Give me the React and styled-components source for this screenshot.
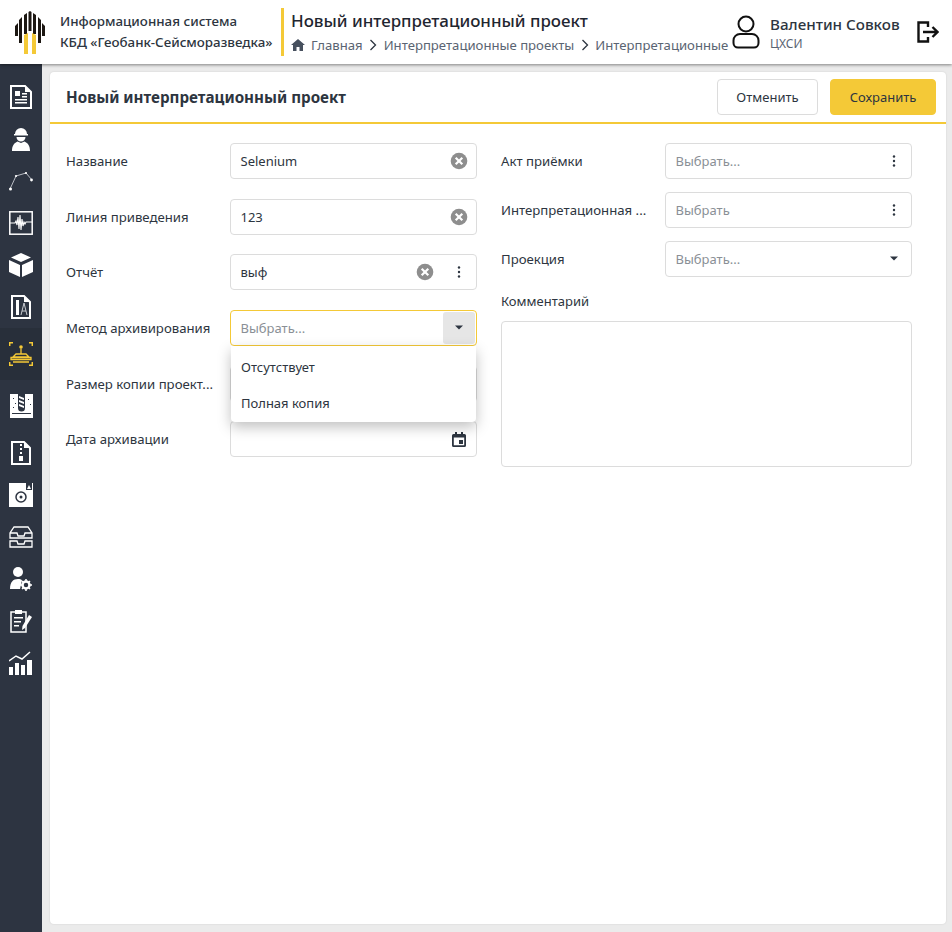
import React from 'react';
import styled, { createGlobalStyle } from 'styled-components';

const GlobalStyle = createGlobalStyle`
  html, body { margin: 0; padding: 0; height: 100%; background: #ebebeb; }
  * { box-sizing: border-box; }
  body { font-family: "Noto Sans", "Open Sans", sans-serif; color: #2d3540; }
`;

const Page = styled.div`
  width: 952px;
  height: 932px;
  overflow: hidden;
  display: flex;
  flex-direction: column;
`;

const Header = styled.header`
  height: 64px;
  flex: none;
  background: #fff;
  box-shadow: 0 1px 3px rgba(0, 0, 0, 0.45);
  position: relative;
  z-index: 2;
  display: flex;
  align-items: center;
`;

const LogoBox = styled.div`
  width: 60px;
  flex: none;
  display: flex;
  padding-left: 15px;
`;

const SystemName = styled.div`
  width: 221px;
  flex: none;
  font-size: 13.35px;
  font-weight: 500;
  line-height: 21px;
  color: #2d3540;
  white-space: nowrap;
`;

const TitleBlock = styled.div`
  width: 449px;
  flex: none;
  height: 48px;
  border-left: 3px solid #f4c937;
  padding: 1px 0 0 7px;
  overflow: hidden;
`;

const PageTitle = styled.div`
  font-size: 16.9px;
  font-weight: 500;
  line-height: 24px;
  color: #1f2630;
  white-space: nowrap;
`;

const Crumbs = styled.div`
  display: flex;
  align-items: center;
  height: 24px;
  font-size: 13.15px;
  color: #5a6472;
  white-space: nowrap;
`;

const CrumbIcon = styled.svg`
  flex: none;
  margin: 0 ${(p) => p.$gap || 0}px;
`;

const HomeIcon = styled.svg`
  flex: none;
  margin-right: 6px;
`;

const UserBlock = styled.div`
  flex: 1;
  display: flex;
  align-items: center;
  padding-left: 2px;
`;

const UserText = styled.div`
  margin-left: 10px;
  width: 147px;
`;

const UserName = styled.div`
  font-size: 15.2px;
  font-weight: 500;
  line-height: 22px;
  color: #2d3540;
  white-space: nowrap;
`;

const UserOrg = styled.div`
  font-size: 12px;
  line-height: 17px;
  color: #5a6472;
`;

const Body = styled.div`
  flex: 1;
  display: flex;
  min-height: 0;
`;

const Sidebar = styled.nav`
  width: 42px;
  flex: none;
  background: #2d3441;
  padding-top: 12px;
  display: flex;
  flex-direction: column;
  align-items: center;
`;

const SideItem = styled.div`
  width: 42px;
  height: ${(p) => p.$h}px;
  flex: none;
  display: flex;
  align-items: center;
  justify-content: center;
  background: ${(p) => (p.$active ? '#282f3a' : 'transparent')};
`;

const Main = styled.main`
  flex: 1;
  padding: 8px 6px 8px 8px;
  min-width: 0;
`;

const Card = styled.section`
  height: 100%;
  background: #fff;
  border-radius: 4px;
  box-shadow: 0 0 2px rgba(0, 0, 0, 0.12);
`;

const CardHead = styled.div`
  height: 52px;
  border-bottom: 2px solid #f4c937;
  display: flex;
  align-items: center;
  padding: 0 10px 0 16px;
`;

const CardTitle = styled.h1`
  flex: 1;
  margin: 0;
  font-size: 15.2px;
  font-weight: 700;
  color: #2d3540;
`;

const Button = styled.button`
  height: 36px;
  width: ${(p) => p.$w}px;
  margin-left: ${(p) => p.$ml || 0}px;
  font: 400 13px "Noto Sans", sans-serif;
  color: #2d3540;
  border-radius: 4px;
  border: 1px solid ${(p) => (p.$primary ? '#f4c937' : '#dcdcdc')};
  background: ${(p) => (p.$primary ? '#f4c937' : '#fff')};
`;

const FormGrid = styled.div`
  display: flex;
  padding: 19px 34px 0 16px;
  gap: 24px;
`;

const Column = styled.div`
  width: ${(p) => p.$w}px;
  flex: none;
  display: flex;
  flex-direction: column;
`;

const Row = styled.div`
  display: flex;
  align-items: center;
  height: 36px;
  margin-bottom: ${(p) => p.$mb}px;
  position: relative;
`;

const Label = styled.label`
  width: 164px;
  flex: none;
  font-size: 13.2px;
  color: #2d3540;
  white-space: nowrap;
`;

const Field = styled.div`
  width: 247px;
  height: 36px;
  flex: none;
  display: flex;
  align-items: center;
  padding: 0 8px 0 9.5px;
  background: #fff;
  border-radius: 4px;
  border: 1px solid ${(p) => (p.$focus ? '#f4c937' : '#dcdcdc')};
  font-size: 13px;
  position: relative;
`;

const FieldText = styled.span`
  flex: 1;
  color: ${(p) => (p.$placeholder ? '#8a8f96' : '#2d3540')};
  white-space: nowrap;
`;

const ArrowBox = styled.div`
  position: absolute;
  right: 1px;
  top: 1px;
  width: 32px;
  height: 32px;
  border-radius: 3px;
  background: #e6e6e6;
  display: flex;
  align-items: center;
  justify-content: center;
`;

const Dropdown = styled.ul`
  position: absolute;
  left: 165px;
  top: 36px;
  width: 245px;
  height: 76px;
  margin: 0;
  padding: 3px 0;
  list-style: none;
  background: #fff;
  border-radius: 0 0 4px 4px;
  box-shadow: 0 5px 14px rgba(0, 0, 0, 0.25);
  z-index: 5;
`;

const Option = styled.li`
  height: 36px;
  padding: 0 10px;
  display: flex;
  align-items: center;
  font-size: 13px;
  color: #2d3540;
`;

const CommentLabel = styled.label`
  font-size: 13px;
  line-height: 18px;
  margin-bottom: 11px;
`;

const CommentBox = styled.div`
  width: 411px;
  height: 146px;
  border: 1px solid #dcdcdc;
  border-radius: 4px;
`;

const ClearIcon = ({ gap }) => (
  <svg width="18" height="18" viewBox="0 0 18 18" style={{ flex: 'none', marginRight: gap }}>
    <circle cx="9" cy="9" r="8.300" fill="#8e8e8e" />
    <path d="M5.700 5.700l6.600 6.600M12.300 5.700l-6.600 6.600" stroke="#fff" strokeWidth="2.200" />
  </svg>
);

const DotsIcon = () => (
  <CrumbIcon width="18" height="18" viewBox="0 0 18 18">
    <circle cx="9" cy="4.500" r="1.200" fill="#2d3540" />
    <circle cx="9" cy="9" r="1.200" fill="#2d3540" />
    <circle cx="9" cy="13.500" r="1.200" fill="#2d3540" />
  </CrumbIcon>
);

const CaretIcon = () => (
  <svg width="18" height="6" viewBox="0 0 18 6">
    <path d="M5 .5h8L9 4.500z" fill="#2d3540" />
  </svg>
);

const Chevron = () => (
  <CrumbIcon $gap={6.5} width="8" height="12" viewBox="0 0 8 12">
    <path d="M1.500 1l5 5-5 5" fill="none" stroke="#2d3540" strokeWidth="1.300" />
  </CrumbIcon>
);

const Logo = () => (
  <svg width="30" height="43" viewBox="0 0 30 43">
    <path d="M0 15l3-3v13H0zM4 9l3-3v26H4zM9 4l3-2v21H9zM13.500 1l1.500-1 1.500 1v19h-3zM18 2l3 2v19h-3zM23 6l3 3v23h-3zM27 12l3 3v10h-3z" fill="#1c1712" />
    <path d="M9 24l4-2v21H9zM17 22l4 2v19h-4z" fill="#f4c937" />
  </svg>
);

// sidebar pictograms, white on dark
const ReportIcon = () => (
  <svg width="22" height="24" viewBox="0 0 22 24">
    <path d="M1 1h14l6 6v16H1z" fill="none" stroke="#fff" strokeWidth="2" />
    <path d="M15 1v6h6z" fill="#fff" />
    <path d="M5 6h5v5H5zM12 8h5v1.500h-5zM12 11h5v1.500h-5zM5 14h12v1.500H5zM5 17h12v1.500H5z" fill="#fff" />
  </svg>
);

const WorkerIcon = () => (
  <svg width="18" height="24" viewBox="0 0 18 24">
    <path d="M3 7a6 6 0 0 1 12 0h1v1.500H2V7z" fill="#fff" />
    <path d="M4.500 10h9a4.500 4.500 0 0 1-9 0zM0 24c0-5 2-8 5.500-9.500L9 16l3.500-1.500C16 16 18 19 18 24z" fill="#fff" />
  </svg>
);

const CurveIcon = () => (
  <svg width="24" height="20" viewBox="0 0 24 20">
    <path d="M1 18L7 5l10-3 6 7" fill="none" stroke="#c9ccd2" strokeWidth="0.900" />
    <circle cx="1.500" cy="18" r="1.500" fill="#fff" />
    <circle cx="7" cy="5" r="1.100" fill="#fff" />
    <circle cx="17" cy="2" r="1.100" fill="#fff" />
    <circle cx="22.500" cy="9" r="1.400" fill="#fff" />
  </svg>
);

const SeismicIcon = () => (
  <svg width="24" height="24" viewBox="0 0 24 24">
    <rect x="0.800" y="0.800" width="22.400" height="22.400" fill="none" stroke="#fff" strokeWidth="1.500" />
    <path d="M1 12h5l1-2 1 4 1-8 1 12 1-14 1 15 1-11 1 7 1-4 1 2 1-2h6" fill="none" stroke="#fff" strokeWidth="1.100" />
  </svg>
);

const CubeIcon = () => (
  <svg width="24" height="24" viewBox="0 0 24 24">
    <path d="M12 0l10 4.500-10 4.500L2 4.500zM0 7l11 5v12L0 19zM24 7l-11 5v12l11-5z" fill="#fff" />
  </svg>
);

const DraftIcon = () => (
  <svg width="20" height="24" viewBox="0 0 20 24">
    <path d="M1 1h12l6 6v16H1z" fill="none" stroke="#fff" strokeWidth="2" />
    <path d="M13 1v6h6zM5 5h3v15H5z" fill="#fff" />
    <path d="M13 8l-3 12M13 8l3 12M11 16h4" fill="none" stroke="#c9ccd2" strokeWidth="1" />
  </svg>
);

const StampIcon = () => (
  <svg width="24" height="24" viewBox="0 0 24 24" fill="none" stroke="#f4c937" strokeWidth="1.300">
    <path d="M.7 4V.7h3.300M20 .7h3.300V4M.7 20v3.300h3.300M20 23.300h3.300V20" strokeWidth="1.500" />
    <path d="M12 6.500v5M4 15l3-3h10l3 3zM2 15.500h20v2H2zM4 20h16" />
    <circle cx="12" cy="5" r="1.800" fill="#f4c937" stroke="none" />
  </svg>
);

const DrillIcon = () => (
  <svg width="23" height="24" viewBox="0 0 23 24">
    <path d="M0 0h8v14a3.500 3.500 0 0 0 7 0V0h8v24H0z" fill="#fff" />
    <path d="M9 2l5 2v2L9 4zM9 6l5 2v2L9 8zM9 10l5 2v2l-5-2z" fill="#fff" />
    <path d="M3 4h1v1H3zM5 9h1v1H5zM18 5h1v1h-1zM20 10h1v1h-1zM3 13h1v1H3zM2 19h19v1H2z" fill="#2d3441" />
  </svg>
);

const ZipIcon = () => (
  <svg width="20" height="24" viewBox="0 0 20 24">
    <path d="M1 1h12l6 6v16H1z" fill="none" stroke="#fff" strokeWidth="2" />
    <path d="M13 1v6h6zM9 3h2v2H9zM9 7h2v2H9zM9 11h2v2H9zM8 15h4v5H8z" fill="#fff" />
  </svg>
);

const DiskIcon = () => (
  <svg width="24" height="24" viewBox="0 0 24 24">
    <path d="M0 0h17v7h6V0h1v24H0z" fill="#fff" />
    <path d="M20 2l2 4h-4z" fill="#fff" />
    <circle cx="12" cy="14" r="5" fill="none" stroke="#2d3441" strokeWidth="1.500" />
    <circle cx="12" cy="14" r="1.500" fill="#2d3441" />
  </svg>
);

const TrayIcon = () => (
  <svg width="24" height="22" viewBox="0 0 24 22" fill="none" stroke="#fff" strokeWidth="1.300">
    <path d="M5 1h14l4 6v5H1V7zM1 7h7l1 3h6l1-3h7" />
    <path d="M1 15h7l1 3h6l1-3h7v6H1z" />
  </svg>
);

const UserGearIcon = () => (
  <svg width="22" height="24" viewBox="0 0 22 24">
    <circle cx="8" cy="5" r="5" fill="#fff" />
    <path d="M0 22c0-7 3-10 8-10 2 0 3 .5 4 1l-2 9z" fill="#fff" />
    <circle cx="16" cy="18" r="3.500" fill="none" stroke="#fff" strokeWidth="2.500" />
    <path d="M16 12v2M16 22v2M10 18h2M20 18h2M12 14l1.500 1.500M18.500 20.500L20 22M12 22l1.500-1.500M18.500 15.500L20 14" stroke="#fff" strokeWidth="1.500" />
  </svg>
);

const NotesIcon = () => (
  <svg width="22" height="24" viewBox="0 0 22 24">
    <path d="M1 3h15v20H1z" fill="none" stroke="#fff" strokeWidth="1.500" />
    <path d="M5 1h7v4H5zM4 8h9v1.500H4zM4 12h7v1.500H4zM4 16h5v1.500H4z" fill="#fff" />
    <path d="M19 6l3 2-7 11-3 2 .5-4z" fill="#fff" />
  </svg>
);

const ChartIcon = () => (
  <svg width="24" height="24" viewBox="0 0 24 24">
    <path d="M0 10l7-5 6 3 8-7" fill="none" stroke="#fff" strokeWidth="1.500" />
    <path d="M0 16h4v8H0zM6 12h4v12H6zM12 14h4v10h-4zM18 9h5v15h-5z" fill="#fff" />
  </svg>
);

const sideItems = [
  { id: 'report', h: 42, Icon: ReportIcon },
  { id: 'worker', h: 42, Icon: WorkerIcon },
  { id: 'curve', h: 42, Icon: CurveIcon },
  { id: 'seismic', h: 42, Icon: SeismicIcon },
  { id: 'cube', h: 42, Icon: CubeIcon },
  { id: 'draft', h: 42, Icon: DraftIcon },
  { id: 'stamp', h: 52, Icon: StampIcon, active: true },
  { id: 'drill', h: 52, Icon: DrillIcon },
  { id: 'zip', h: 42, Icon: ZipIcon },
  { id: 'disk', h: 42, Icon: DiskIcon },
  { id: 'tray', h: 42, Icon: TrayIcon },
  { id: 'usergear', h: 42, Icon: UserGearIcon },
  { id: 'notes', h: 42, Icon: NotesIcon },
  { id: 'chart', h: 42, Icon: ChartIcon },
];

export default function App() {
  return (
    <Page>
      <GlobalStyle />
      <Header>
        <LogoBox>
          <Logo />
        </LogoBox>
        <SystemName>
          Информационная система
          <br />
          КБД «Геобанк-Сейсморазведка»
        </SystemName>
        <TitleBlock>
          <PageTitle>Новый интерпретационный проект</PageTitle>
          <Crumbs>
            <HomeIcon width="14" height="12" viewBox="0 0 14 12">
              <path d="M7 0l7 6h-2v6H8.500V8h-3v4H2V6H0z" fill="#47505e" />
            </HomeIcon>
            Главная
            <Chevron />
            Интерпретационные проекты
            <Chevron />
            Интерпретационные
          </Crumbs>
        </TitleBlock>
        <UserBlock>
          <svg width="28" height="34" viewBox="0 0 28 34" fill="none" stroke="#111" strokeWidth="2">
            <circle cx="14" cy="9" r="7.500" />
            <path d="M8 19h12a6.500 6.500 0 0 1 6.500 6.500V28a4.500 4.500 0 0 1-4.500 4.500H6A4.500 4.500 0 0 1 1.500 28v-2.500A6.500 6.500 0 0 1 8 19z" />
          </svg>
          <UserText>
            <UserName>Валентин Совков</UserName>
            <UserOrg>ЦХСИ</UserOrg>
          </UserText>
          <svg width="22" height="22" viewBox="0 0 22 22" fill="none" stroke="#111" strokeWidth="2.400">
            <path d="M11 6V1.500H1.500v19H11V16M6 11h14M15.500 6l5 5-5 5" />
          </svg>
        </UserBlock>
      </Header>
      <Body>
        <Sidebar>
          {sideItems.map(({ id, h, Icon, active }) => (
            <SideItem key={id} $h={h} $active={active}>
              <Icon />
            </SideItem>
          ))}
        </Sidebar>
        <Main>
          <Card>
            <CardHead>
              <CardTitle>Новый интерпретационный проект</CardTitle>
              <Button $w={101}>Отменить</Button>
              <Button $w={106} $ml={12} $primary>
                Сохранить
              </Button>
            </CardHead>
            <FormGrid>
              <Column $w={411}>
                <Row $mb={20}>
                  <Label>Название</Label>
                  <Field>
                    <FieldText>Selenium</FieldText>
                    <ClearIcon />
                  </Field>
                </Row>
                <Row $mb={19}>
                  <Label>Линия приведения</Label>
                  <Field>
                    <FieldText>123</FieldText>
                    <ClearIcon />
                  </Field>
                </Row>
                <Row $mb={20}>
                  <Label>Отчёт</Label>
                  <Field>
                    <FieldText>выф</FieldText>
                    <ClearIcon gap={16} />
                    <DotsIcon />
                  </Field>
                </Row>
                <Row $mb={20}>
                  <Label>Метод архивирования</Label>
                  <Field $focus>
                    <FieldText $placeholder>Выбрать...</FieldText>
                    <ArrowBox>
                      <CaretIcon />
                    </ArrowBox>
                  </Field>
                  <Dropdown>
                    <Option>Отсутствует</Option>
                    <Option>Полная копия</Option>
                  </Dropdown>
                </Row>
                <Row $mb={19}>
                  <Label>Размер копии проект...</Label>
                  <Field />
                </Row>
                <Row $mb={0}>
                  <Label>Дата архивации</Label>
                  <Field>
                    <FieldText />
                    <CrumbIcon $gap={2} width="14" height="15" viewBox="0 0 14 15">
                      <path d="M3 0h2v2h4V0h2v2h1.500A1.500 1.500 0 0 1 14 3.500v10a1.500 1.500 0 0 1-1.500 1.500h-11A1.500 1.500 0 0 1 0 13.500v-10A1.500 1.500 0 0 1 1.500 2H3zM1.800 5.500v7.700h10.400V5.500zM7 8h4v4H7z" fill="#2d3540" fillRule="evenodd" />
                    </CrumbIcon>
                  </Field>
                </Row>
              </Column>
              <Column $w={411}>
                <Row $mb={13}>
                  <Label>Акт приёмки</Label>
                  <Field>
                    <FieldText $placeholder>Выбрать...</FieldText>
                    <DotsIcon />
                  </Field>
                </Row>
                <Row $mb={13}>
                  <Label>Интерпретационная ...</Label>
                  <Field>
                    <FieldText $placeholder>Выбрать</FieldText>
                    <DotsIcon />
                  </Field>
                </Row>
                <Row $mb={15}>
                  <Label>Проекция</Label>
                  <Field>
                    <FieldText $placeholder>Выбрать...</FieldText>
                    <CaretIcon />
                  </Field>
                </Row>
                <CommentLabel>Комментарий</CommentLabel>
                <CommentBox />
              </Column>
            </FormGrid>
          </Card>
        </Main>
      </Body>
    </Page>
  );
}
